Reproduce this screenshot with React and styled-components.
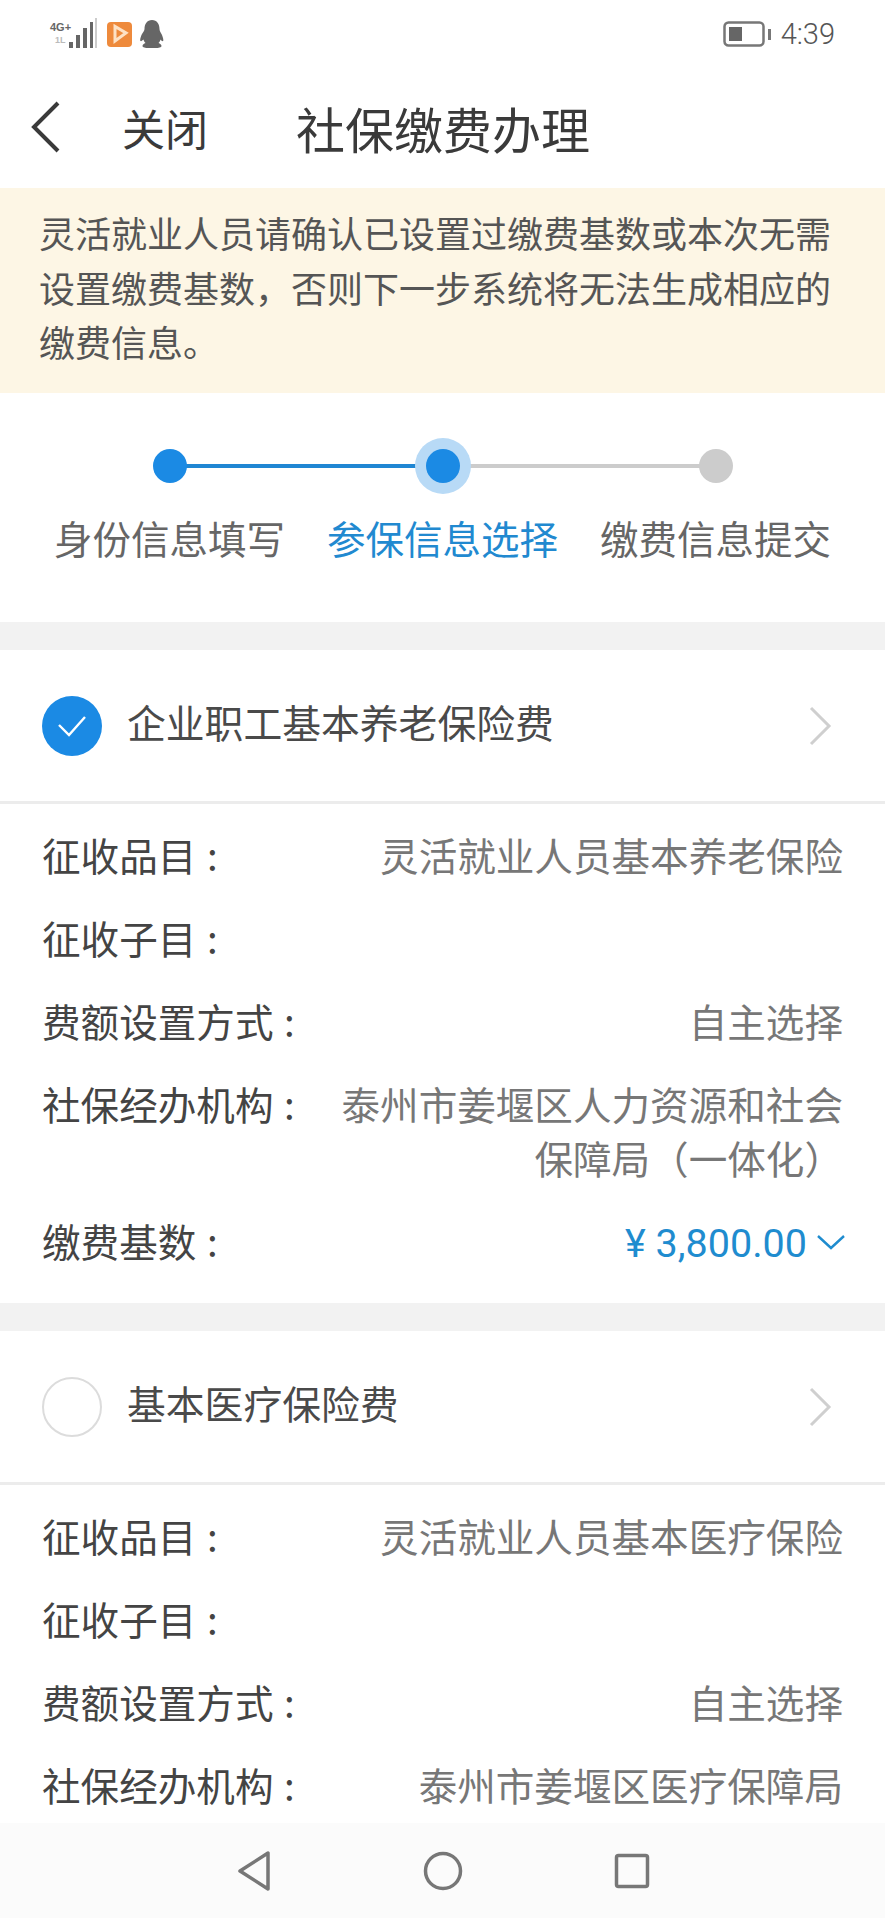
import styled, { createGlobalStyle } from "styled-components";

const GlobalStyle = createGlobalStyle`
    html, body {
        margin: 0;
        padding: 0;
        background: #fff;
    }
    * {
        box-sizing: border-box;
    }
`;

const Page = styled.div`
    position: relative;
    width: 885px;
    height: 1918px;
    overflow: hidden;
    background: #fff;
    font-family: "Noto Sans CJK SC", "Noto Sans", sans-serif;
`;

const StatusBar = styled.div`
    height: 66px;
    padding: 2px 50px 0 50px;
    display: flex;
    align-items: center;
    justify-content: space-between;
`;

const StatusGroup = styled.div`
    display: flex;
    align-items: center;
    gap: ${(p) => p.$gap || 8}px;
`;

const Clock = styled.span`
    font-family: Roboto, sans-serif;
    font-weight: 300;
    font-size: 29px;
    color: #555;
`;

const Header = styled.div`
    height: 122px;
    padding-left: 30px;
    display: flex;
    align-items: center;
`;

const CloseText = styled.span`
    margin-left: 60px;
    font-size: 43px;
    color: #3a3a3a;
`;

const Title = styled.span`
    margin-left: 88px;
    font-size: 49px;
    color: #3a3a3a;
`;

const Notice = styled.div`
    height: 205px;
    padding: 17px 39px 0;
    background: #fdf6e5;
    font-size: 36px;
    line-height: 54.5px;
    color: #555;
`;

const Steps = styled.div`
    height: 229px;
    display: grid;
    grid-template-columns: repeat(3, 273px);
    justify-content: center;
    padding-top: 45px;
`;

const Step = styled.div`
    display: flex;
    flex-direction: column;
    align-items: center;
`;

const Track = styled.div`
    position: relative;
    width: 100%;
    height: 56px;
    display: flex;
    align-items: center;
    justify-content: center;
`;

const Line = styled.div`
    position: absolute;
    top: 26px;
    height: 4px;
    width: 50%;
    background: ${(p) => (p.$on ? "#1f86d3" : "#cccccc")};
    ${(p) => (p.$side === "left" ? "left: 0;" : "right: 0;")}
`;

const Dot = styled.div`
    position: relative;
    width: 34px;
    height: 34px;
    border-radius: 50%;
    background: ${(p) => (p.$on ? "#1b8ae4" : "#cccccc")};
    ${(p) => p.$current && "box-shadow: 0 0 0 11px #b8daf6;"}
`;

const StepLabel = styled.div`
    margin-top: 18px;
    font-size: 38.5px;
    line-height: 50px;
    white-space: nowrap;
    color: ${(p) => (p.$on ? "#2189d0" : "#666")};
`;

const Gap = styled.div`
    height: 28px;
    background: #f2f2f2;
`;

const CardHead = styled.div`
    height: 154px;
    padding: 0 42px;
    display: flex;
    align-items: center;
    border-bottom: 3px solid #ececec;
`;

const CheckCircle = styled.div`
    width: 60px;
    height: 60px;
    border-radius: 50%;
    flex-shrink: 0;
    display: flex;
    align-items: center;
    justify-content: center;
    background: ${(p) => (p.$checked ? "#1b8ae4" : "#fff")};
    border: ${(p) => (p.$checked ? "none" : "2px solid #dcdcdc")};
`;

const CardTitle = styled.div`
    flex: 1;
    margin-left: 25px;
    padding-bottom: 10px;
    font-size: 38.8px;
    color: #4a4a4a;
`;

const ChevronWrap = styled.div`
    display: flex;
    margin-right: 10px;
`;

const Rows = styled.div`
    padding: 8.5px 42px 17px;
`;

const Row = styled.div`
    display: flex;
    justify-content: space-between;
    padding: 14.25px 0;
    font-size: 38.6px;
    line-height: 54.5px;
`;

const Label = styled.div`
    flex-shrink: 0;
    color: #444;
    white-space: nowrap;
    word-spacing: 2px;
`;

const Value = styled.div`
    max-width: 510px;
    text-align: right;
    color: #777;
`;

const Amount = styled.div`
    display: flex;
    align-items: center;
    padding-top: 4px;
    margin-right: -3px;
    font-family: Roboto, sans-serif;
    font-size: 39.5px;
    color: #1f8ccf;
`;

const NavBar = styled.div`
    position: absolute;
    left: 0;
    right: 0;
    bottom: 0;
    height: 95px;
    background: #fbfbfb;
    display: grid;
    grid-template-columns: repeat(3, 189px);
    justify-content: center;
    justify-items: center;
    align-items: center;
`;

const SignalText = styled.div`
    display: flex;
    flex-direction: column;
    font-family: "Liberation Sans", sans-serif;
    font-size: 11px;
    font-weight: 700;
    line-height: 13px;
    color: #666;
    margin-right: -10px;
`;

const FaintText = styled.span`
    color: #bbb;
    font-size: 9px;
    padding-left: 5px;
`;

const Chevron = () => (
    <svg width="26" height="40" viewBox="0 0 26 40" fill="none">
        <path d="M4 2l18 18L4 38" stroke="#cfcfcf" strokeWidth="3" />
    </svg>
);

const Check = () => (
    <svg width="30" height="22" viewBox="0 0 30 22" fill="none">
        <path d="M2 10l10 10L28 2" stroke="#fff" strokeWidth="2.4" />
    </svg>
);

const Signal = () => (
    <svg width="30" height="32" viewBox="0 0 30 32">
        <rect x="0" y="24" width="4" height="6" fill="#666" />
        <rect x="7" y="17" width="4" height="13" fill="#666" />
        <rect x="14" y="10" width="4" height="20" fill="#666" />
        <rect x="21" y="4" width="3" height="26" fill="#666" />
        <rect x="26" y="0" width="2" height="30" fill="#ccc" />
    </svg>
);

const VideoApp = () => (
    <svg width="25" height="25" viewBox="0 0 25 25">
        <rect width="25" height="25" rx="4" fill="#ee8a3c" />
        <path d="M8 4.500v14.500L19 11z" fill="none" stroke="#fde2c6" strokeWidth="3" />
    </svg>
);

const Penguin = () => (
    <svg width="24" height="28" viewBox="0 0 24 28">
        <path
            d="M12 0c5 0 7.500 4 7.500 9 0 2 1 3 2 5s2.500 6 1.500 7c-.8.6-2-.8-2.500-1.500-.3 1.500-1 2.500-2 3.500 1.500.6 3 1.500 3 3 0 1.500-3 2-6 2h-7c-3 0-6-.5-6-2 0-1.500 1.500-2.400 3-3-1-1-1.700-2-2-3.500C2.500 20.200 1.300 21.600.5 21c-1-1 .5-5 1.500-7s2.500-3 2.500-5C4.500 4 7 0 12 0z"
            fill="#666"
        />
    </svg>
);

const Battery = () => (
    <svg width="48" height="26" viewBox="0 0 48 26" fill="none">
        <rect x="1.500" y="1.500" width="39" height="23" rx="4" stroke="#777" strokeWidth="2.500" />
        <rect x="6" y="6" width="13" height="14" fill="#666" />
        <rect x="45" y="8" width="3" height="11" fill="#777" />
    </svg>
);

const Back = () => (
    <svg width="32" height="52" viewBox="0 0 32 52" fill="none">
        <path d="M28 2L4 26l24 24" stroke="#3a3a3a" strokeWidth="4" />
    </svg>
);

const SmallDown = () => (
    <svg width="30" height="18" viewBox="0 0 30 18" fill="none" style={{ margin: "0 0 6px 9px" }}>
        <path d="M2 3l13 12L28 3" stroke="#1f8ccf" strokeWidth="2.400" />
    </svg>
);

const NavBack = () => (
    <svg width="36" height="42" viewBox="0 0 36 42" fill="none">
        <path d="M32 3v36L4 21z" stroke="#777" strokeWidth="3.500" strokeLinejoin="round" />
    </svg>
);

const NavHome = () => (
    <svg width="40" height="40" viewBox="0 0 40 40" fill="none">
        <circle cx="20" cy="20" r="17.500" stroke="#777" strokeWidth="3.500" />
    </svg>
);

const NavRecent = () => (
    <svg width="36" height="36" viewBox="0 0 36 36" fill="none">
        <rect x="2.500" y="2.500" width="31" height="31" rx="2" stroke="#777" strokeWidth="3.500" />
    </svg>
);

const pension = [
    ["征收品目 :", "灵活就业人员基本养老保险"],
    ["征收子目 :", ""],
    ["费额设置方式 :", "自主选择"],
    ["社保经办机构 :", "泰州市姜堰区人力资源和社会保障局（一体化）"],
];

const medical = [
    ["征收品目 :", "灵活就业人员基本医疗保险"],
    ["征收子目 :", ""],
    ["费额设置方式 :", "自主选择"],
    ["社保经办机构 :", "泰州市姜堰区医疗保障局"],
];

const Card = ({ title, checked, rows, children }) => (
    <>
        <CardHead>
            <CheckCircle $checked={checked}>{checked && <Check />}</CheckCircle>
            <CardTitle>{title}</CardTitle>
            <ChevronWrap>
                <Chevron />
            </ChevronWrap>
        </CardHead>
        <Rows>
            {rows.map(([label, value]) => (
                <Row key={label}>
                    <Label>{label}</Label>
                    <Value>{value}</Value>
                </Row>
            ))}
            {children}
        </Rows>
    </>
);

const App = () => {
    return (
        <Page>
            <GlobalStyle />
            <StatusBar>
                <StatusGroup>
                    <SignalText>
                        <span>4G+</span>
                        <FaintText>1L</FaintText>
                    </SignalText>
                    <Signal />
                    <VideoApp />
                    <Penguin />
                </StatusGroup>
                <StatusGroup $gap={10}>
                    <Battery />
                    <Clock>4:39</Clock>
                </StatusGroup>
            </StatusBar>
            <Header>
                <Back />
                <CloseText>关闭</CloseText>
                <Title>社保缴费办理</Title>
            </Header>
            <Notice>
                灵活就业人员请确认已设置过缴费基数或本次无需设置缴费基数，否则下一步系统将无法生成相应的缴费信息。
            </Notice>
            <Steps>
                <Step>
                    <Track>
                        <Line $side="right" $on />
                        <Dot $on />
                    </Track>
                    <StepLabel>身份信息填写</StepLabel>
                </Step>
                <Step>
                    <Track>
                        <Line $side="left" $on />
                        <Line $side="right" />
                        <Dot $on $current />
                    </Track>
                    <StepLabel $on>参保信息选择</StepLabel>
                </Step>
                <Step>
                    <Track>
                        <Line $side="left" />
                        <Dot />
                    </Track>
                    <StepLabel>缴费信息提交</StepLabel>
                </Step>
            </Steps>
            <Gap />
            <Card title="企业职工基本养老保险费" checked rows={pension}>
                <Row>
                    <Label>缴费基数 :</Label>
                    <Amount>
                        ¥ 3,800.00
                        <SmallDown />
                    </Amount>
                </Row>
            </Card>
            <Gap />
            <Card title="基本医疗保险费" rows={medical} />
            <NavBar>
                <NavBack />
                <NavHome />
                <NavRecent />
            </NavBar>
        </Page>
    );
};

export default App;
